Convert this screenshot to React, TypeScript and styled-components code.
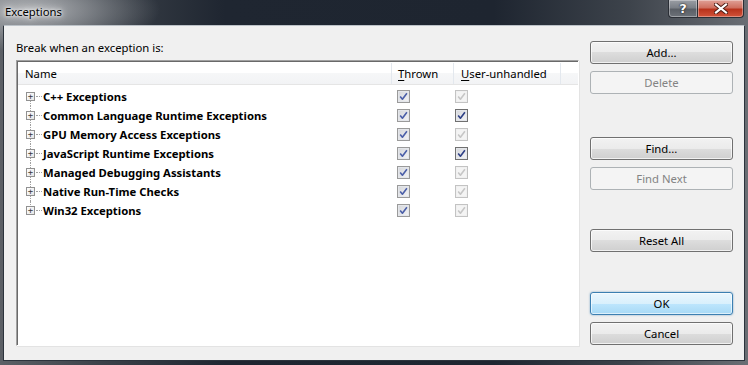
import * as React from 'react'
import styled, { createGlobalStyle, css } from 'styled-components';

const GlobalStyle = createGlobalStyle`
    html, body {
        margin: 0;
        padding: 0;
        background: #1e2530;
    }
    * { box-sizing: border-box; }
`

const FONT = `"Segoe UI", "Noto Sans", "Open Sans", sans-serif`;

type CheckState = 'on' | 'strong' | 'off';

const rows: { name: string; thrown: CheckState; user: CheckState }[] = [
    { name: 'C++ Exceptions', thrown: 'on', user: 'off' },
    { name: 'Common Language Runtime Exceptions', thrown: 'on', user: 'strong' },
    { name: 'GPU Memory Access Exceptions', thrown: 'on', user: 'off' },
    { name: 'JavaScript Runtime Exceptions', thrown: 'on', user: 'strong' },
    { name: 'Managed Debugging Assistants', thrown: 'on', user: 'off' },
    { name: 'Native Run-Time Checks', thrown: 'on', user: 'off' },
    { name: 'Win32 Exceptions', thrown: 'on', user: 'off' },
];

const Check = ({ state }: { state: CheckState }) => (
    <CheckBox $state={state}>
        <svg width="9" height="9" viewBox="0 0 9 9">
            <path d="M1.2 4.6 L3.4 7.2 L7.9 1.2" fill="none" strokeWidth="1.6" strokeLinejoin="round" />
        </svg>
    </CheckBox>
)

export default function App() {
    return (
        <>
            <GlobalStyle />
            <Window>
                <TitleBar>
                    <Title>Exceptions</Title>
                    <Caption>
                        <HelpButton>?</HelpButton>
                        <CloseButton>
                            <svg width="14" height="11" viewBox="0 0 14 11">
                                <path d="M2 1.5 L12 9.5 M12 1.5 L2 9.5" stroke="#4a1a12" strokeWidth="4" strokeLinecap="square" />
                                <path d="M2 1.5 L12 9.5 M12 1.5 L2 9.5" stroke="#ffffff" strokeWidth="2.2" strokeLinecap="square" />
                            </svg>
                        </CloseButton>
                    </Caption>
                </TitleBar>
                <Client>
                    <LeftPane>
                        <Label>Break when an exception is:</Label>
                        <ListBox>
                            <Header>
                                <HeadCell $w={374} $pad={7}>Name</HeadCell>
                                <HeadCell $w={62} $pad={6}><u>T</u>hrown</HeadCell>
                                <HeadCell $w={107} $pad={7}><u>U</u>ser-unhandled</HeadCell>
                                <HeadFill />
                            </Header>
                            <Body>
                                {rows.map((r, i) => (
                                    <Row key={r.name}>
                                        <NameCell>
                                            <Tree $first={i === 0} $last={i === rows.length - 1}>
                                                <Expander>+</Expander>
                                                <Dash />
                                            </Tree>
                                            <RowText>{r.name}</RowText>
                                        </NameCell>
                                        <CheckCell $w={62} $pad={5}><Check state={r.thrown} /></CheckCell>
                                        <CheckCell $w={107} $pad={1}><Check state={r.user} /></CheckCell>
                                    </Row>
                                ))}
                            </Body>
                        </ListBox>
                    </LeftPane>
                    <ButtonColumn>
                        <Button>Add...</Button>
                        <Button $gap={7} disabled>Delete</Button>
                        <Button $gap={43}>Find...</Button>
                        <Button $gap={7} disabled>Find Next</Button>
                        <Button $gap={39}>Reset All</Button>
                        <Button $gap={40} $default>OK</Button>
                        <Button $gap={7}>Cancel</Button>
                    </ButtonColumn>
                </Client>
            </Window>
        </>
    )
}

const Window = styled.div`
    width: 748px;
    height: 365px;
    display: flex;
    flex-direction: column;
    padding: 0 3px 4px 3px;
    background:
        radial-gradient(ellipse 130px 42px at 30px 10px, rgba(200,202,205,0.8), rgba(200,202,205,0) 100%),
        linear-gradient(90deg, #5c6066 0%, #3a4048 14%, #1f2631 30%, #1e2530 66%, #3d434b 84%, #6a6e74 100%);
    font-family: ${FONT};
    font-size: 11.3px;
    color: #000;
`

const TitleBar = styled.div`
    height: 25px;
    display: flex;
    justify-content: space-between;
    align-items: flex-start;
`

const Title = styled.div`
    padding: 4px 0 0 2px;
    color: #000;
    text-shadow: 0 0 6px #fff, 0 0 3px #fff, 0 0 8px rgba(255,255,255,0.8);
`

const Caption = styled.div`
    display: flex;
    margin-right: 1px;
`

const capBtn = css`
    height: 18px;
    display: flex;
    align-items: center;
    justify-content: center;
    border: 1px solid #2b2f36;
    border-top: none;
    box-shadow: inset 0 0 0 1px rgba(255,255,255,0.35);
`

const HelpButton = styled.div`
    ${capBtn};
    width: 29px;
    border-radius: 0 0 0 4px;
    border-right: none;
    background: linear-gradient(180deg, #9a9ea4 0%, #7b8087 45%, #5a5f66 55%, #6d7279 100%);
    color: #fff;
    font-family: "DejaVu Sans", sans-serif;
    font-weight: bold;
    font-size: 13px;
    text-shadow: 0 0 2px #222, 0 0 1px #000;
`

const CloseButton = styled.div`
    ${capBtn};
    width: 47px;
    border-radius: 0 0 4px 0;
    background: linear-gradient(180deg, #e0a197 0%, #cf7060 45%, #b8331c 55%, #d2533a 100%);
`

const Client = styled.div`
    flex: 1;
    display: flex;
    background: #f0f0f0;
    border: 1px solid #2c333c;
    border-top: 1px solid #bcc2c8;
    padding: 14px 11px 14px 12px;
`

const LeftPane = styled.div`
    width: 563px;
    display: flex;
    flex-direction: column;
`

const Label = styled.div`
    height: 20px;
    padding-top: 1px;
    line-height: 14px;
`

const ListBox = styled.div`
    flex: 1;
    background: #fff;
    border-top: 1px solid #a0a0a0;
    border-left: 1px solid #a0a0a0;
    border-right: 1px solid #fff;
    border-bottom: 1px solid #fff;
    box-shadow: inset 1px 1px 0 #696969, 1px 1px 0 #e3e3e3;
    padding: 1px 0 0 1px;
    display: flex;
    flex-direction: column;
`

const Header = styled.div`
    height: 23px;
    display: flex;
    padding-top: 1px;
    background: linear-gradient(180deg, #ffffff 0%, #ffffff 50%, #f6f7f8 50%, #f2f3f5 100%);
    border-bottom: 1px solid #e5e5e5;
`

const HeadCell = styled.div<{ $w: number; $pad: number }>`
    width: ${p => p.$w}px;
    padding-left: ${p => p.$pad}px;
    display: flex;
    align-items: center;
    border-right: 1px solid #e3e8ee;
    white-space: nowrap;
    u { text-decoration-thickness: 1px; text-underline-offset: 2px; }
`

const HeadFill = styled.div`
    flex: 1;
`

const Body = styled.div`
    padding-top: 2px;
`

const Row = styled.div`
    height: 19px;
    display: flex;
    align-items: center;
`

const NameCell = styled.div`
    width: 374px;
    height: 100%;
    display: flex;
    align-items: center;
`

const Tree = styled.div<{ $first: boolean; $last: boolean }>`
    position: relative;
    width: 25px;
    height: 100%;
    display: flex;
    align-items: center;
    padding-left: 8px;
    &::before {
        content: '';
        position: absolute;
        left: 12px;
        top: ${p => (p.$first ? '50%' : '0')};
        bottom: ${p => (p.$last ? '50%' : '0')};
        border-left: 1px dotted #a0a0a0;
    }
`

const Expander = styled.span`
    position: relative;
    z-index: 1;
    width: 9px;
    height: 9px;
    border: 1px solid #919191;
    background: linear-gradient(135deg, #ffffff 0%, #e6e6e6 100%);
    display: flex;
    align-items: center;
    justify-content: center;
    font-family: "DejaVu Sans Mono", monospace;
    font-size: 9px;
    line-height: 7px;
    color: #3a3a3a;
    overflow: hidden;
`

const Dash = styled.span`
    width: 6px;
    margin-left: 1px;
    border-top: 1px dotted #a0a0a0;
`

const RowText = styled.span`
    font-weight: bold;
    white-space: nowrap;
`

const CheckCell = styled.div<{ $w: number; $pad: number }>`
    width: ${p => p.$w}px;
    padding-left: ${p => p.$pad}px;
    display: flex;
    align-items: center;
`

const CheckBox = styled.span<{ $state: CheckState }>`
    width: 13px;
    height: 13px;
    display: flex;
    align-items: center;
    justify-content: center;
    border: 1px solid ${p => (p.$state === 'off' ? '#c3c3c3' : p.$state === 'strong' ? '#707070' : '#9a9a9a')};
    background: ${p => (p.$state === 'off' ? '#f4f4f4' : 'linear-gradient(135deg, #d4d6da 0%, #f4f4f6 100%)')};
    box-shadow: inset 0 0 0 1px ${p => (p.$state === 'off' ? '#f0f0f0' : '#e4e6ea')};
    svg path {
        stroke: ${p => (p.$state === 'off' ? '#c6c6c6' : p.$state === 'strong' ? '#2d3f85' : '#4a5ea8')};
    }
`

const ButtonColumn = styled.div`
    width: 143px;
    margin-left: 11px;
    padding-top: 1px;
    display: flex;
    flex-direction: column;
`

const Button = styled.button<{ $gap?: number; $default?: boolean }>`
    height: 23px;
    margin-top: ${p => p.$gap ?? 0}px;
    font-family: ${FONT};
    font-size: 11.3px;
    color: #000;
    border: 1px solid #707070;
    border-radius: 3px;
    background: linear-gradient(180deg, #f2f2f2 0%, #ebebeb 50%, #dddddd 50%, #cfcfcf 100%);
    box-shadow: inset 0 0 0 1px rgba(255,255,255,0.7);
    padding: 0 0 1px 0;
    ${p => p.$default && css`
        border-color: #3c7fb1;
        background: linear-gradient(180deg, #eaf6fd 0%, #d9f0fc 50%, #bee6fd 50%, #a7d9f5 100%);
        box-shadow: inset 0 0 0 1px rgba(255,255,255,0.6), 0 0 2px rgba(60,127,177,0.7);
    `}
    &:disabled {
        color: #838383;
        border-color: #adb2b5;
        background: #f4f4f4;
        box-shadow: none;
    }
`
